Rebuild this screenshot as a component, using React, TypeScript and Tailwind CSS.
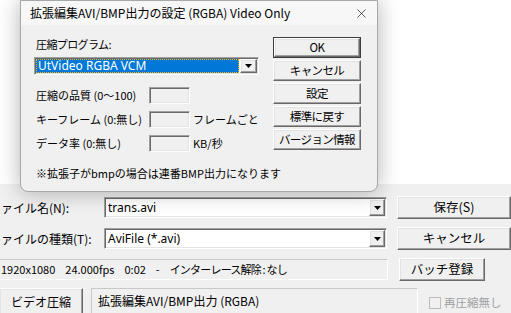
import { X } from "lucide-react"

// classic Win32 bevels
const sunken =
  "border border-t-[#a0a0a0] border-l-[#a0a0a0] border-b-white border-r-white shadow-[inset_1px_1px_0_#696969,inset_-1px_-1px_0_#e3e3e3]"
const raised =
  "border border-t-white border-l-white border-b-[#696969] border-r-[#696969] shadow-[inset_-1px_-1px_0_#a0a0a0,inset_1px_1px_0_#e3e3e3] bg-[#f0f0f0]"
const staticEdge = "border border-t-[#c8c8c8] border-l-[#c8c8c8] border-b-white border-r-white"

function Arrow() {
  return (
    <svg width="7" height="4" viewBox="0 0 7 4">
      <path d="M0 0h7L3.5 4z" fill="#000" />
    </svg>
  )
}

function DlgButton({ label, primary }: { label: string; primary?: boolean }) {
  return (
    <div className={primary ? "border border-[#3c3c3c]" : ""}>
      <div
        className={`${raised} flex items-center justify-center text-[11.5px] tracking-[-0.6px] leading-none whitespace-nowrap ${
          primary ? "h-[19px]" : "h-[21px]"
        }`}
      >
        {label}
      </div>
    </div>
  )
}

function FieldRow({ label, suffix }: { label: string; suffix?: string }) {
  return (
    <div className="flex items-center h-[17px]">
      <div className="w-[115px] pl-[2px] text-[11px] whitespace-nowrap">{label}</div>
      <div className={`${sunken} w-[41px] h-[17px] bg-[#f0f0f0]`} />
      {suffix && <div className="ml-[3px] text-[11px] whitespace-nowrap">{suffix}</div>}
    </div>
  )
}

function Combo({ text }: { text: string }) {
  return (
    <div className={`${sunken} w-[285px] h-[21px] bg-white flex items-center`}>
      <div className="flex-1 pl-[3px] text-[12px] font-['Noto_Sans','Noto_Sans_CJK_JP',sans-serif]">{text}</div>
      <div className={`${raised} w-[16px] h-[17px] mr-[1px] flex items-center justify-center`}>
        <Arrow />
      </div>
    </div>
  )
}

function BigButton({ label, w }: { label: string; w: string }) {
  return (
    <div className={`${raised} ${w} h-[23px] flex items-center justify-center text-[12.5px]`}>{label}</div>
  )
}

function RowLabel({ text }: { text: string }) {
  // the window is scrolled off the left edge, so the first glyph is cut
  return (
    <div className="w-[104px] shrink-0 text-[12px] whitespace-nowrap">
      <span className="inline-block ml-[-11px]">{text}</span>
    </div>
  )
}

export default function App() {
  return (
    <div className="relative w-[511px] h-[313px] overflow-hidden bg-[#f0f0f0] text-black font-['Noto_Sans_CJK_JP',sans-serif]">
      {/* window behind the dialog */}
      <div className="h-[184px] bg-white" />
      <div className="pt-[12px] flex flex-col gap-[8px]">
        <div className="flex items-center h-[23px]">
          <RowLabel text="ファイル名(N):" />
          <Combo text="trans.avi" />
          <div className="ml-[10px]">
            <BigButton label="保存(S)" w="w-[114px]" />
          </div>
        </div>
        <div className="flex items-center h-[23px]">
          <RowLabel text="ファイルの種類(T):" />
          <Combo text="AviFile (*.avi)" />
          <div className="ml-[10px]">
            <BigButton label="キャンセル" w="w-[114px]" />
          </div>
        </div>
        <div className="flex items-center h-[23px]">
          <div className={`${staticEdge} border-l-0 w-[388px] h-[21px] flex items-center gap-[10px] pl-[1px] text-[11px] whitespace-nowrap`}>
            <span>1920x1080</span>
            <span>24.000fps</span>
            <span>0:02</span>
            <span>-</span>
            <span className="tracking-[-0.8px]">インターレース解除 : なし</span>
          </div>
          <div className="ml-[11px]">
            <BigButton label="バッチ登録" w="w-[86px]" />
          </div>
        </div>
        <div className="flex items-start mt-[-1px]">
          <div className={`${raised} border-l-0 w-[83px] h-[27px] flex items-center justify-center text-[12px]`}>ビデオ圧縮</div>
          <div className={`${staticEdge} ml-[8px] w-[327px] h-[26px] flex items-center pl-[6px] text-[12px]`}>
            拡張編集AVI/BMP出力 (RGBA)
          </div>
          <div className="ml-[11px] mt-[6px] flex items-center gap-[3px] text-[11.5px] text-[#a0a0a0] whitespace-nowrap">
            <div className="w-[12px] h-[12px] border border-[#bcbcbc] bg-[#f0f0f0]" />
            再圧縮無し
          </div>
        </div>
      </div>

      {/* settings dialog on top */}
      <div className="absolute left-[20px] top-0 w-[358px] h-[192px] rounded-b-[8px] border border-[#a8a8a8] bg-[#f0f0f0] shadow-[0_0_22px_rgba(0,0,0,0.3)] overflow-hidden">
        <div className="h-[24px] bg-[#f7f7f7] flex items-center pl-[9px] pr-[8px] text-[12px]">
          <div className="flex-1 whitespace-nowrap">拡張編集AVI/BMP出力の設定 (RGBA) Video Only</div>
          <X size={15} strokeWidth={1} />
        </div>
        <div className="flex pl-[13px]">
          <div className="w-[225px] flex flex-col">
            <div className="mt-[12px] h-[14px] pl-[2px] text-[11px] leading-[14px] tracking-[-0.6px]">圧縮プログラム:</div>
            <div className={`${sunken} mt-[6px] h-[18px] flex items-center bg-white`}>
              <div className="flex-1 h-[14px] mx-[1px] bg-[#0078d7] outline-1 outline-dotted outline-[#ffb000] outline-offset-[-1px] text-white text-[12px] leading-[14px] pl-[2px] font-['Noto_Sans','Noto_Sans_CJK_JP',sans-serif]">
                UtVideo RGBA VCM
              </div>
              <div className={`${raised} w-[17px] h-[14px] mr-[1px] flex items-center justify-center`}>
                <Arrow />
              </div>
            </div>
            <div className="mt-[12px] flex flex-col gap-[7px]">
              <FieldRow label="圧縮の品質 (0〜100)" />
              <FieldRow label="キーフレーム (0:無し)" suffix="フレームごと" />
              <FieldRow label="データ率 (0:無し)" suffix="KB/秒" />
            </div>
            <div className="mt-[14px] pl-[2px] text-[11px] leading-[14px] whitespace-nowrap">
              ※拡張子がbmpの場合は連番BMP出力になります
            </div>
          </div>
          <div className="ml-[14px] mt-[12px] w-[88px] flex flex-col gap-[2px]">
            <DlgButton label="OK" primary />
            <DlgButton label="キャンセル" />
            <DlgButton label="設定" />
            <DlgButton label="標準に戻す" />
            <DlgButton label="バージョン情報" />
          </div>
        </div>
      </div>
    </div>
  )
}
